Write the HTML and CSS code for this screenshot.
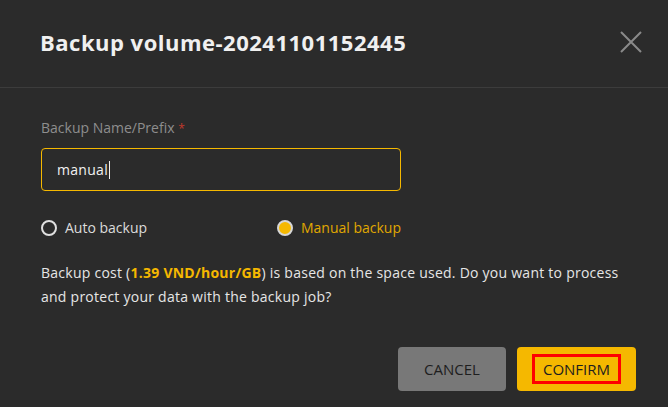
FILE: index.html
```html
<!DOCTYPE html>
<html>

<head>
    <title>Backup volume</title>
    <link rel="stylesheet" href="styles.css">
</head>

<body>

    <div class="modal">
        <div class="modal-header">
            <h2 class="modal-title">Backup volume-20241101152445</h2>
            <button class="close-btn" aria-label="Close">
                <svg width="22" height="22" viewBox="0 0 22 22">
                    <path d="M1 1 L21 21 M21 1 L1 21" stroke="#8a8a8a" stroke-width="2" fill="none"/>
                </svg>
            </button>
        </div>

        <div class="modal-body">
            <div class="form">
                <label class="field-label">Backup Name/Prefix <span class="required">*</span></label>
                <div class="text-input">manual<span class="caret"></span></div>

                <div class="radio-row">
                    <label class="radio">
                        <span class="radio-dot"></span>
                        Auto backup
                    </label>
                    <label class="radio checked">
                        <span class="radio-dot"></span>
                        Manual backup
                    </label>
                </div>
            </div>

            <p class="note">
                Backup cost (<strong class="price">1.39 VND/hour/GB</strong>) is based on the space used. Do you want to process
                and protect your data with the backup job?
            </p>
        </div>

        <div class="modal-footer">
            <button class="btn btn-cancel">CANCEL</button>
            <button class="btn btn-confirm"><span class="focus-box">CONFIRM</span></button>
        </div>
    </div>

</body>

</html>
```

FILE: styles.css
```css
html,
body {
    margin: 0;
    height: 100%;
    background: #2b2b2b;
}

body {
    font-family: "Open Sans", "Noto Sans", sans-serif;
    color: #e6e6e6;
}

.modal {
    width: 668px;
    height: 407px;
    display: flex;
    flex-direction: column;
}

.modal-header {
    height: 88px;
    box-sizing: border-box;
    padding: 0 26px 4px 40px;
    display: flex;
    align-items: center;
    justify-content: space-between;
    border-bottom: 1px solid #3c3c3c;
}

.modal-title {
    margin: 0;
    font-size: 22px;
    line-height: 30px;
    font-weight: 700;
    letter-spacing: 0.5px;
    color: #f0f0f0;
}

.close-btn {
    background: none;
    border: none;
    padding: 0;
    width: 22px;
    height: 22px;
    cursor: pointer;
}

.modal-body {
    padding: 31px 32px 0 41px;
}

.form {
    width: 360px;
}

.field-label {
    display: block;
    font-size: 14px;
    line-height: 18px;
    color: #8e8e8e;
    margin-bottom: 10px;
}

.required {
    color: #c0392b;
    font-size: 12px;
}

.text-input {
    height: 43px;
    box-sizing: border-box;
    border: 1px solid #f5b800;
    border-radius: 4px;
    padding: 0 15px;
    display: flex;
    align-items: center;
    font-size: 14px;
    letter-spacing: 0.3px;
    color: #f2f2f2;
}

.caret {
    display: inline-block;
    width: 1px;
    height: 18px;
    background: #f2f2f2;
    margin-left: 1px;
}

.radio-row {
    display: flex;
    justify-content: space-between;
    margin-top: 27px;
}

.radio {
    display: flex;
    align-items: center;
    gap: 8px;
    font-size: 14px;
    line-height: 20px;
    color: #dcdcdc;
}

.radio-dot {
    width: 12px;
    height: 12px;
    border: 2px solid #e0e0e0;
    border-radius: 50%;
}

.radio.checked {
    color: #e0a800;
}

.radio.checked .radio-dot {
    background: #f5b800;
    border-color: #d6d6d6;
}

.note {
    margin: 23px 0 0;
    font-size: 14px;
    line-height: 24px;
    letter-spacing: 0.25px;
    color: #e6e6e6;
}

.price {
    color: #f5b800;
}

.modal-footer {
    margin-top: auto;
    padding: 0 32px 16px;
    display: flex;
    justify-content: flex-end;
    gap: 11px;
}

.btn {
    height: 44px;
    border: none;
    border-radius: 4px;
    font-family: inherit;
    font-size: 15px;
    color: #1e1e1e;
    cursor: pointer;
}

.btn-cancel {
    width: 108px;
    background: #787878;
}

.btn-confirm {
    width: 119px;
    background: #f5b800;
}

.focus-box {
    display: inline-block;
    line-height: 20px;
    padding: 2px 8px;
    border: 3px solid #ff0000;
}
```
